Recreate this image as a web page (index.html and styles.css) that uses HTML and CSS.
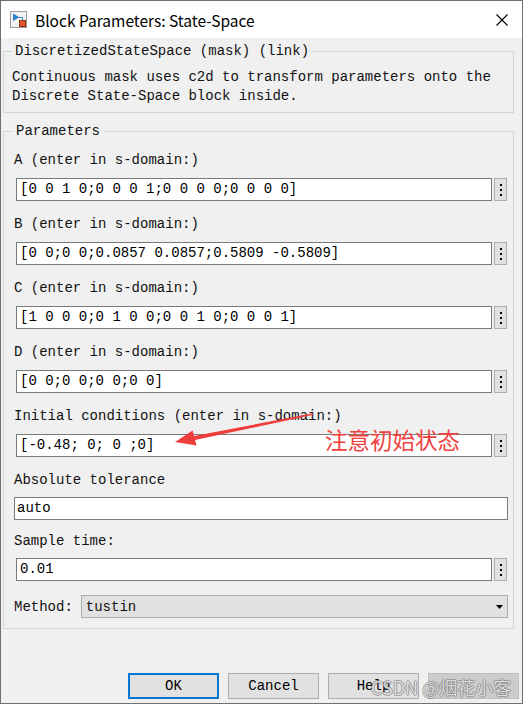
FILE: index.html
```html
<!DOCTYPE html>
<html lang="en">
<head>
<meta charset="utf-8">
<title>Block Parameters: State-Space</title>
<link rel="stylesheet" href="styles.css">
</head>
<body>
<div class="window">
  <div class="titlebar">
    <svg class="app-icon" viewBox="0 0 17 17" width="17" height="17">
      <rect x="0.5" y="0.5" width="16" height="16" fill="#f2f2f2" stroke="#9c9c9c"/>
      <polygon points="3,2.5 3,10 9.5,6.2" fill="#2f7fd3"/>
      <path d="M9 6.5 H12.5 V9.5" fill="none" stroke="#2f7fd3" stroke-width="1"/>
      <rect x="9.5" y="9.5" width="6" height="6" fill="#e4562b" stroke="#8d3015"/>
    </svg>
    <span class="title">Block Parameters: State-Space</span>
    <svg class="close" viewBox="0 0 12 12" width="12" height="12">
      <path d="M0.5 0.5 L11.5 11.5 M11.5 0.5 L0.5 11.5" stroke="#000" stroke-width="1.1" fill="none"/>
    </svg>
  </div>

  <div class="content">
    <fieldset class="group desc">
      <legend>DiscretizedStateSpace (mask) (link)</legend>
      <p>Continuous mask uses c2d to transform parameters onto the<br>Discrete State-Space block inside.</p>
    </fieldset>

    <fieldset class="group params">
      <legend>Parameters</legend>

      <div class="param">
        <div class="label">A (enter in s-domain:)</div>
        <div class="field">
          <div class="input">[0 0 1 0;0 0 0 1;0 0 0 0;0 0 0 0]</div>
          <div class="more"><i></i><i></i><i></i></div>
        </div>
      </div>

      <div class="param">
        <div class="label">B (enter in s-domain:)</div>
        <div class="field">
          <div class="input">[0 0;0 0;0.0857 0.0857;0.5809 -0.5809]</div>
          <div class="more"><i></i><i></i><i></i></div>
        </div>
      </div>

      <div class="param">
        <div class="label">C (enter in s-domain:)</div>
        <div class="field">
          <div class="input">[1 0 0 0;0 1 0 0;0 0 1 0;0 0 0 1]</div>
          <div class="more"><i></i><i></i><i></i></div>
        </div>
      </div>

      <div class="param">
        <div class="label">D (enter in s-domain:)</div>
        <div class="field">
          <div class="input">[0 0;0 0;0 0;0 0]</div>
          <div class="more"><i></i><i></i><i></i></div>
        </div>
      </div>

      <div class="param">
        <div class="label">Initial conditions (enter in s-domain:)</div>
        <div class="field">
          <div class="input">[-0.48; 0; 0 ;0]</div>
          <div class="more"><i></i><i></i><i></i></div>
        </div>
      </div>

      <div class="param plain">
        <div class="label">Absolute tolerance</div>
        <div class="field">
          <div class="input">auto</div>
        </div>
      </div>

      <div class="param sample">
        <div class="label">Sample time:</div>
        <div class="field">
          <div class="input">0.01</div>
          <div class="more"><i></i><i></i><i></i></div>
        </div>
      </div>

      <div class="method">
        <span class="method-label">Method:</span>
        <div class="select">
          <span>tustin</span>
          <svg class="caret" viewBox="0 0 7 4" width="7" height="4"><polygon points="0,0 7,0 3.5,4" fill="#000"/></svg>
        </div>
      </div>
    </fieldset>
  </div>

  <div class="footer">
    <button class="btn default">OK</button>
    <button class="btn">Cancel</button>
    <button class="btn">Help</button>
    <button class="btn disabled" aria-label="Apply"></button>
  </div>

  <svg class="note-arrow" viewBox="170 405 150 45" width="150" height="45">
    <polygon points="313,413.3 194.2,436 192.6,430.6 175,442 196.6,445.4 195,440 313.4,414.7" fill="#ef3d3b"/>
  </svg>
  <span class="note-text">注意初始状态</span>
  <span class="watermark">CSDN @烟花小客</span>
</div>
</body>
</html>
```

FILE: styles.css
```css
html, body {
  margin: 0;
  padding: 0;
  background: #ffffff;
}

body {
  font-family: "Liberation Mono", "DejaVu Sans Mono", monospace;
  font-size: 14px;
  color: #111;
}

.window {
  position: relative;
  width: 523px;
  height: 704px;
  box-sizing: border-box;
  border: 1px solid #707070;
  background: #f0f0f0;
  display: flex;
  flex-direction: column;
  overflow: hidden;
}

/* Title bar */
.titlebar {
  height: 37px;
  flex-shrink: 0;
  background: #ffffff;
  display: flex;
  align-items: center;
  padding-left: 9px;
}

.app-icon {
  display: block;
  margin-right: 8px;
  margin-top: -1px;
}

.title {
  flex: 1;
  font-family: "Noto Sans CJK SC", "Noto Sans", sans-serif;
  font-size: 15.5px;
  color: #000;
  white-space: nowrap;
}

.close {
  display: block;
  margin-right: 14px;
}

/* Fieldsets */
.group {
  margin: 4px 8px 0 2px;
  border: 1px solid #d4d4d4;
  min-width: 0;
}

.group legend {
  line-height: 18px;
  padding: 0 3px;
  white-space: pre;
}

.desc {
  padding: 8px 8px 6px 8px;
}

.desc p {
  margin: 0;
  line-height: 19px;
  white-space: nowrap;
}

.params {
  margin-top: 9px;
  padding: 11px 5px 10px 10px;
}

.params legend {
  margin-left: -2px;
  padding: 0 4px;
}

.param {
  margin-bottom: 14px;
}

.label {
  line-height: 18px;
  margin-bottom: 9px;
  white-space: pre;
}

.field {
  display: flex;
  gap: 2px;
  padding: 0 1px 0 2px;
}

.input {
  flex: 1;
  height: 23px;
  box-sizing: border-box;
  border: 1px solid #7a7a7a;
  background: #ffffff;
  padding-left: 3px;
  line-height: 21px;
  white-space: pre;
  color: #000;
}

.more {
  width: 13px;
  height: 23px;
  box-sizing: border-box;
  border: 1px solid #adadad;
  background: #e1e1e1;
  display: flex;
  flex-direction: column;
  align-items: center;
  justify-content: center;
  gap: 3px;
}

.more i {
  display: block;
  width: 2px;
  height: 2px;
  background: #000;
}

.param.plain {
  margin-bottom: 12px;
}

.param.plain .label,
.param.sample .label {
  margin-bottom: 8px;
}

.param.plain .field {
  padding: 0;
}

.param.plain .input {
  padding-left: 2px;
}

.method {
  display: flex;
  align-items: center;
  gap: 8px;
}

.method-label {
  line-height: 18px;
}

.select {
  flex: 1;
  height: 23px;
  box-sizing: border-box;
  border: 1px solid #adadad;
  background: #e1e1e1;
  display: flex;
  align-items: center;
  justify-content: space-between;
  padding: 0 4px;
}

.caret {
  display: block;
}

/* Footer buttons */
.footer {
  margin-top: auto;
  display: flex;
  justify-content: flex-end;
  gap: 9px;
  padding: 0 3px 4px 0;
}

.btn {
  width: 91px;
  height: 26px;
  box-sizing: border-box;
  border: 1px solid #adadad;
  background: #e1e1e1;
  font-family: "Liberation Mono", "DejaVu Sans Mono", monospace;
  font-size: 14px;
  color: #000;
  padding: 0;
  margin: 0;
}

.btn.default {
  border: 2px solid #0078d7;
}

.btn.disabled {
  background: #cccccc;
  border-color: #bfbfbf;
}

/* Annotation overlay */
.note-arrow {
  position: absolute;
  left: 169px;
  top: 404px;
}

.note-text {
  position: absolute;
  left: 324px;
  top: 427px;
  font-family: "Noto Sans CJK SC", sans-serif;
  font-size: 22.5px;
  line-height: 1;
  color: #f0413e;
  white-space: nowrap;
}

.watermark {
  position: absolute;
  left: 370px;
  top: 677px;
  font-family: "Noto Sans CJK SC", sans-serif;
  font-size: 18px;
  line-height: 18px;
  color: rgba(255, 255, 255, 0.75);
  text-shadow: 1px 0 0 rgba(90, 90, 90, 0.45), -1px 0 0 rgba(90, 90, 90, 0.45),
               0 1px 0 rgba(90, 90, 90, 0.45), 0 -1px 0 rgba(90, 90, 90, 0.45);
  white-space: nowrap;
}
```
